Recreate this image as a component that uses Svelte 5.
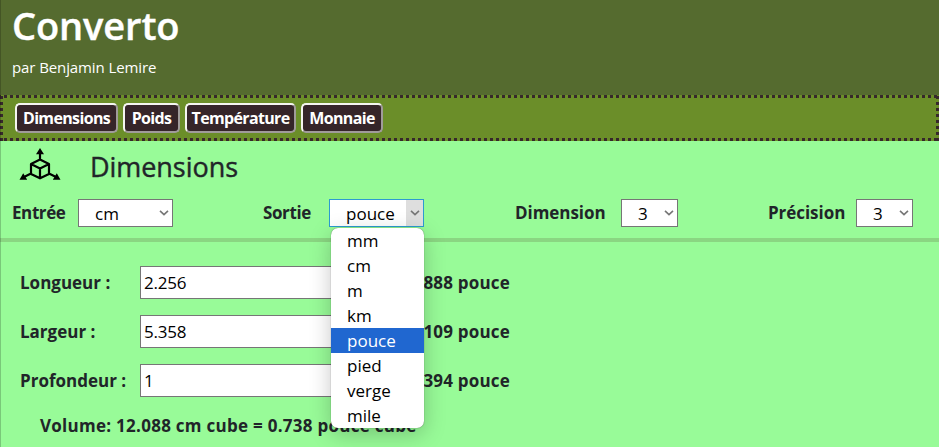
<script>
  const tabs = [
    { label: 'Dimensions', kind: 'wide' },
    { label: 'Poids', kind: 'short' },
    { label: 'Température', kind: 'long' },
    { label: 'Monnaie', kind: 'medium' }
  ];
  const units = ['mm', 'cm', 'm', 'km', 'pouce', 'pied', 'verge', 'mile'];
  const rows = [
    { label: 'Longueur :', value: '2.256', result: '= 0.888 pouce' },
    { label: 'Largeur :', value: '5.358', result: '= 2.109 pouce' },
    { label: 'Profondeur :', value: '1', result: '= 0.394 pouce' }
  ];
</script>

{#snippet chevron()}
  <span class="arrow">
    <svg width="10" height="6" viewBox="0 0 10 6"><path d="M1 .9 5 4.7 9 .9" fill="none" stroke="#767676" stroke-width="1.6" /></svg>
  </span>
{/snippet}

<div class="app">
  <header>
    <h1>Converto</h1>
    <p>par Benjamin Lemire</p>
  </header>

  <nav>
    {#each tabs as tab}
      <button class={tab.kind}>{tab.label}</button>
    {/each}
  </nav>

  <main>
    <div class="title">
      <svg width="42" height="34" viewBox="0 0 42 34" fill="none" stroke="#000" stroke-width="2.2" stroke-linejoin="round">
        <path d="M21 11.500 30 16V26L21 30.300 12 26V16ZM12 16 21 20.500 30 16M21 20.500V30.300M21 11.500V5M12 25.500 5 29M30 25.500 37 29" />
        <path d="M21 0 25 6.200H17ZM.500 31.800 4.200 25.200 8.200 31.800ZM41.500 31.800 37.800 25.200 33.800 31.800Z" fill="#000" stroke="none" />
      </svg>
      <h2>Dimensions</h2>
    </div>

    <div class="settings">
      <div class="field entry"><b>Entrée</b><div class="select">
        <span>cm</span>{@render chevron()}
      </div></div>
      <div class="field output"><b>Sortie</b><div class="select open">
        <span>pouce</span>{@render chevron()}
        <ul>
          {#each units as unit}
            <li class:selected={unit === 'pouce'}>{unit}</li>
          {/each}
        </ul>
      </div></div>
      <div class="field dims"><b>Dimension</b><div class="select small">
        <span>3</span>{@render chevron()}
      </div></div>
      <div class="field precision"><b>Précision</b><div class="select small">
        <span>3</span>{@render chevron()}
      </div></div>
    </div>

    <div class="rule"></div>

    <div class="rows">
      {#each rows as row}
        <div class="row">
          <b>{row.label}</b>
          <input value={row.value} />
          <b class="result">{row.result}</b>
        </div>
      {/each}
    </div>
    <p class="volume">Volume: 12.088 cm cube = 0.738 pouce cube</p>
  </main>
</div>

<style>
  .app, .app * { box-sizing: border-box; }
  .app {
    width: 939px;
    height: 447px;
    overflow: hidden;
    position: relative;
    background: #98fb98;
    color: #212529;
    font: 17px/24px "Segoe UI", "Open Sans", "Noto Sans", sans-serif;
  }
  .app::after {
    content: "";
    position: absolute;
    inset: 0 auto 0 0;
    width: 1px;
    background: rgba(0, 0, 0, .2);
  }
  h1, h2, p, ul { margin: 0; padding: 0; }
  header { height: 95px; padding-left: 12px; background: #556b2f; color: #fff; }
  h1 { height: 55px; font-size: 38px; line-height: 50px; font-weight: 600; letter-spacing: -.1px; -webkit-text-stroke: .4px currentColor; }
  header p { font-size: 15px; line-height: 24px; letter-spacing: -.1px; }
  nav {
    height: 46px;
    padding: 8px 0 0 15px;
    display: flex;
    align-items: flex-start;
    gap: 5px;
    background:
      repeating-linear-gradient(90deg, #36282b 0 3px, transparent 3px 6px) -2px 0 / 948px 3px repeat-x,
      repeating-linear-gradient(90deg, #36282b 0 3px, transparent 3px 6px) -2px 100% / 948px 3px repeat-x,
      repeating-linear-gradient(#36282b 0 3px, transparent 3px 6px) 0 1px / 3px 100% no-repeat,
      repeating-linear-gradient(#36282b 0 3px, transparent 3px 6px) 100% 1px / 3px 100% no-repeat,
      #6b8e29;
  }
  button {
    height: 30px;
    padding: 0;
    border: 2px solid;
    border-color: #f4f5ef #a09b9a #a09b9a #f4f5ef;
    border-radius: 5px;
    background: #352529;
    color: #fff;
    font: 700 16px/24px "Segoe UI", "Open Sans", "Noto Sans", sans-serif;
    letter-spacing: -.65px;
    white-space: nowrap;
  }
  .wide { width: 103px; }
  .short { width: 57px; }
  .long { width: 111px; }
  .medium { width: 82px; }
  .title { height: 58px; padding: 7px 0 0 19px; display: flex; gap: 29px; }
  h2 { font-size: 27px; line-height: 38px; font-weight: 500; letter-spacing: -.05px; -webkit-text-stroke: .4px currentColor; }
  .settings { height: 39px; display: flex; }
  .field { display: flex; flex: none; }
  .field b { line-height: 28px; }
  .entry { width: 251px; padding-left: 12px; }
  .entry b { width: 66px; }
  .output { width: 251px; padding-left: 12px; }
  .output b { width: 66px; }
  .dims { width: 254px; padding-left: 13px; }
  .dims b { width: 106px; }
  .precision { padding-left: 12px; }
  .precision b { width: 88px; }
  b { font-weight: 700; letter-spacing: 0; white-space: nowrap; }
  .field b { letter-spacing: -.4px; }
  .dims b, .precision b { letter-spacing: -.05px; }
  .select {
    position: relative;
    width: 95px;
    height: 28px;
    border: 1px solid #767676;
    background: #fff;
    color: #000;
    display: flex;
    line-height: 28px;
  }
  .select > span:first-child { flex: 1; padding-left: 16px; }
  .select.small { width: 57px; }
  .arrow { width: 17px; flex: none; display: flex; align-items: center; justify-content: center; }
  .open { border-color: #2d9bd0; }
  .open .arrow { background: #dedede; }
  ul {
    position: absolute;
    z-index: 2;
    left: 1px;
    top: 28px;
    width: 93px;
    height: 200px;
    list-style: none;
    background: #fff;
    border-radius: 7px;
    box-shadow: 0 0 1px rgba(0, 0, 0, .6), 0 6px 22px rgba(0, 0, 0, .22);
  }
  li { height: 25px; padding-left: 16px; line-height: 26px; }
  .selected { background: #2067d0; color: #fff; }
  .rule { height: 4px; background: #8ad682; }
  .rows { padding: 24px 0 0 20px; display: flex; flex-direction: column; gap: 16px; }
  .row { display: flex; height: 33px; line-height: 33px; }
  .row b { width: 120px; }
  input {
    width: 240px;
    height: 33px;
    padding: 0 3px;
    border: 1px solid #767676;
    border-radius: 0;
    background: #fff;
    color: #000;
    font: 17px/31px "Segoe UI", "Open Sans", "Noto Sans", sans-serif;
    letter-spacing: -.2px;
  }
  .row .result { width: 130px; text-align: right; letter-spacing: .2px; }
  .volume { padding: 17px 0 0 40px; font-weight: 700; letter-spacing: .27px; white-space: nowrap; }
</style>
